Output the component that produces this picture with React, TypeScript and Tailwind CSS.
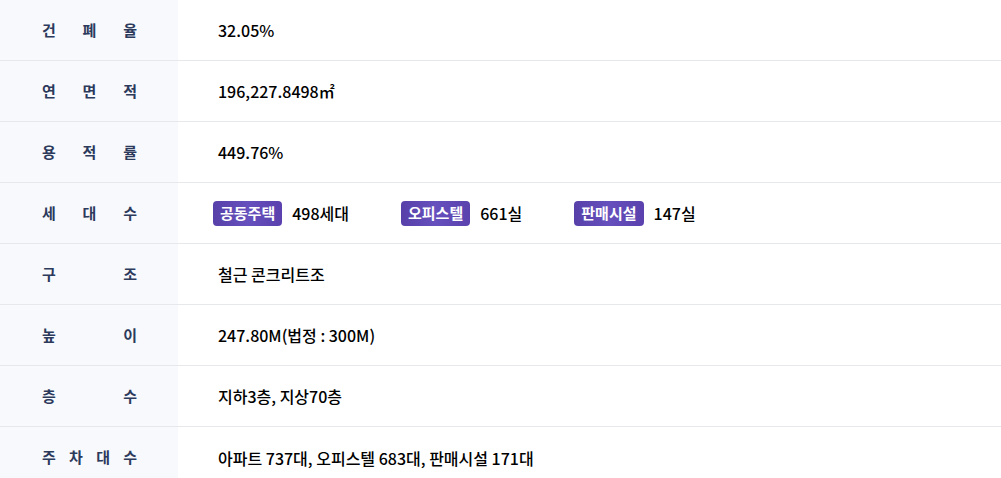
const rows: { label: string[]; value?: string }[] = [
  { label: ['건', '폐', '율'], value: '32.05%' },
  { label: ['연', '면', '적'], value: '196,227.8498㎡' },
  { label: ['용', '적', '률'], value: '449.76%' },
  { label: ['세', '대', '수'] },
  { label: ['구', '조'], value: '철근 콘크리트조' },
  { label: ['높', '이'], value: '247.80M(법정 : 300M)' },
  { label: ['층', '수'], value: '지하3층, 지상70층' },
  { label: ['주', '차', '대', '수'], value: '아파트 737대, 오피스텔 683대, 판매시설 171대' },
];

const units = [
  { tag: '공동주택', count: '498세대' },
  { tag: '오피스텔', count: '661실' },
  { tag: '판매시설', count: '147실' },
];

function Badge({ text }: { text: string }) {
  return (
    <span className="inline-flex h-[25px] items-center rounded-[4px] bg-gradient-to-r from-[#5740a8] via-[#6650bd] to-[#5a41ad] px-[7px] text-[15px] font-bold text-white">
      {text}
    </span>
  );
}

export default function App() {
  return (
    <div className="w-[1001px] bg-white font-['Noto_Sans_CJK_KR','Noto_Sans',sans-serif] text-[15px]">
      {rows.map((r, i) => (
        <div key={i} className={`flex h-[61px] ${i < rows.length - 1 ? 'border-b border-[#e6e8eb]' : ''}`}>
          <div className="flex w-[178px] shrink-0 items-center bg-[#f8f9fc] pl-[42px]">
            <div className="flex w-[95px] justify-between font-bold text-[#2c3a5c]">
              {r.label.map((c, j) => (
                <span key={j}>{c}</span>
              ))}
            </div>
          </div>
          <div className="flex items-center pl-[40px] text-[16px] font-medium text-black">
            {r.value ?? (
              <div className="-ml-[5px] flex gap-[52px]">
                {units.map((u) => (
                  <div key={u.tag} className="flex items-center gap-[10px]">
                    <Badge text={u.tag} />
                    <span>{u.count}</span>
                  </div>
                ))}
              </div>
            )}
          </div>
        </div>
      ))}
    </div>
  );
}
